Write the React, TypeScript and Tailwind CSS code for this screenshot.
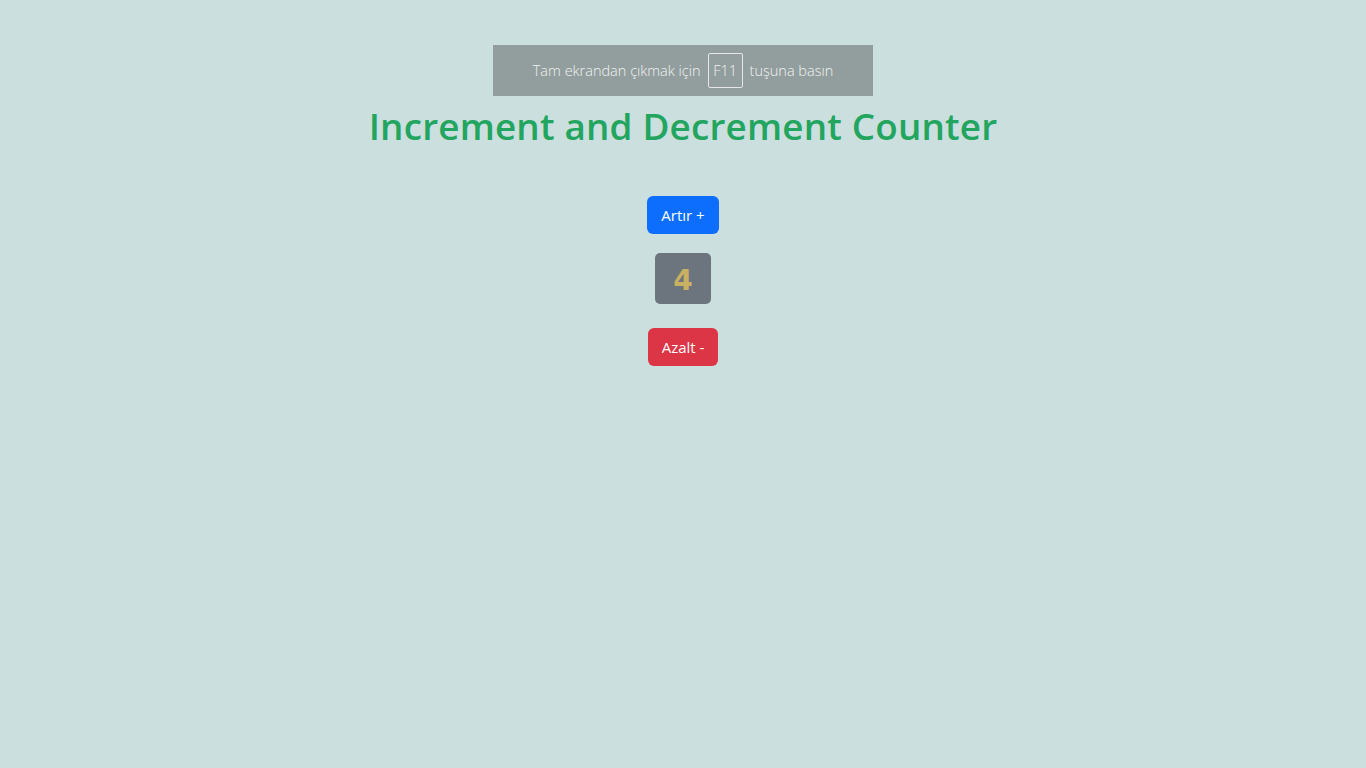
import { useState } from "react";

const App = () => {
  const [count, setCount] = useState(4);

  return (
    <div className="min-h-screen w-full bg-[#cadfde] font-['Open_Sans',sans-serif] flex flex-col items-center pt-[45px]">
      {/* Fullscreen notice */}
      <div className="w-[380px] h-[51px] bg-[#919e9d] flex items-center justify-center gap-[7px] text-[14.5px] text-[#f2f2f2] font-light">
        <span>Tam ekrandan çıkmak için</span>
        <span className="w-[35px] h-[35px] border border-[#e6e6e6] rounded-[2px] flex items-center justify-center">
          F11
        </span>
        <span>tuşuna basın</span>
      </div>

      <h1 className="mt-[2px] text-[36.8px] leading-[56px] font-semibold text-[#22a55e] tracking-[0.2px]">
        Increment and Decrement Counter
      </h1>

      <button
        onClick={() => setCount(count + 1)}
        className="mt-[42px] h-[38px] w-[72px] rounded-[6px] bg-[#0d6efd] text-white text-[15px]"
      >
        Artır +
      </button>

      <div className="mt-[19px] w-[56px] h-[51px] rounded-[5px] bg-[#6c757d] flex items-center justify-center pt-[4px] text-[28px] font-bold text-[#c9b062] font-['DejaVu_Sans',sans-serif]">
        {count}
      </div>

      <button
        onClick={() => setCount(count - 1)}
        className="mt-[24px] h-[38px] w-[70px] rounded-[6px] bg-[#dc3545] text-white text-[15px]"
      >
        Azalt -
      </button>
    </div>
  );
};

export default App;
